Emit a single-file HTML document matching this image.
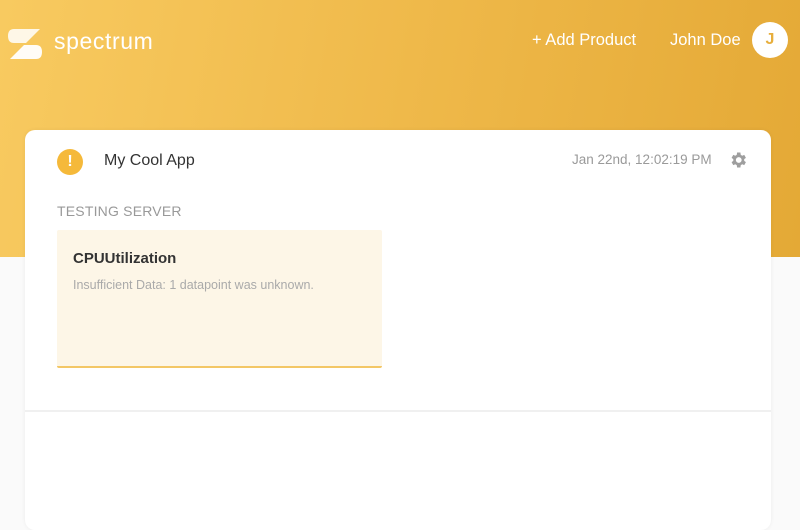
<!DOCTYPE html>
<html><head><meta charset="utf-8"><style>
*{margin:0;padding:0;box-sizing:border-box}
body{width:800px;height:500px;overflow:hidden;background:#fafafa;font-family:"Liberation Sans",sans-serif;position:relative}
.hdr{position:absolute;left:0;top:0;width:800px;height:257px;background:linear-gradient(100deg,#f8ca60 0%,#efb94a 50%,#e4a936 100%)}
.logo{position:absolute;left:8px;top:27px}
.brand{position:absolute;left:54px;top:28px;color:#fff;font-size:23px;letter-spacing:0.6px}
.nav{position:absolute;top:31px;color:#fff;font-size:16.5px}
.av{position:absolute;left:752px;top:22px;width:36px;height:36px;border-radius:50%;background:#fff;color:#e7ae3c;font-size:16px;font-weight:bold;text-align:center;line-height:36px}
.card{position:absolute;left:25px;top:130px;width:746px;height:400px;background:#fff;border-radius:10px;box-shadow:0 0 4px rgba(0,0,0,.06)}
.warn{position:absolute;left:32px;top:19px;width:26px;height:26px;border-radius:50%;background:#f5b93a;color:#fff;font-weight:bold;font-size:16px;text-align:center;line-height:26px}
.title{position:absolute;left:79px;top:22px;font-size:16px;color:#333}
.date{position:absolute;left:547px;top:22px;font-size:13.5px;color:#9a9a9a}
.gear{position:absolute;left:703px;top:20px}
.sec{position:absolute;left:32px;top:73px;font-size:14px;color:#999;letter-spacing:.2px}
.box{position:absolute;left:32px;top:100px;width:325px;height:138px;background:#fdf6e7;border-bottom:2px solid #f3c766;border-radius:2px}
.box h3{position:absolute;left:16px;top:20px;font-size:15px;color:#333;font-weight:bold}
.box p{position:absolute;left:16px;top:48px;font-size:12.5px;color:#aaa}
.div{position:absolute;left:0;top:280px;width:746px;height:2px;background:#f0f0f0}
</style></head><body>
<div class="hdr">
<svg class="logo" width="34" height="34" viewBox="0 0 34 34"><path d="M6 2h26L18 16H6q-6 0-6-7t6-7z" fill="#fff" opacity=".85"/><path d="M28 32H2l14-14h12q6 0 6 7t-6 7z" fill="#fff" opacity=".95"/></svg>
<div class="brand">spectrum</div>
<div class="nav" style="left:532px">+ Add Product</div>
<div class="nav" style="left:670px">John Doe</div>
<div class="av">J</div>
</div>
<div class="card">
<div class="warn">!</div>
<div class="title">My Cool App</div>
<div class="date">Jan 22nd, 12:02:19 PM</div>
<svg class="gear" width="20" height="20" viewBox="0 0 24 24"><path fill="#9e9e9e" d="M19.4 13a7.5 7.5 0 0 0 0-2l2.1-1.6-2-3.5-2.5 1a7 7 0 0 0-1.7-1L14.9 3h-4l-.4 2.9a7 7 0 0 0-1.7 1l-2.5-1-2 3.5L6.4 11a7.5 7.5 0 0 0 0 2l-2.1 1.6 2 3.5 2.5-1a7 7 0 0 0 1.7 1l.4 2.9h4l.4-2.9a7 7 0 0 0 1.7-1l2.5 1 2-3.5zM12.9 15.5a3.5 3.5 0 1 1 0-7 3.5 3.5 0 0 1 0 7z"/></svg>
<div class="sec">TESTING SERVER</div>
<div class="box"><h3>CPUUtilization</h3><p>Insufficient Data: 1 datapoint was unknown.</p></div>
<div class="div"></div>
</div>
</body></html>
